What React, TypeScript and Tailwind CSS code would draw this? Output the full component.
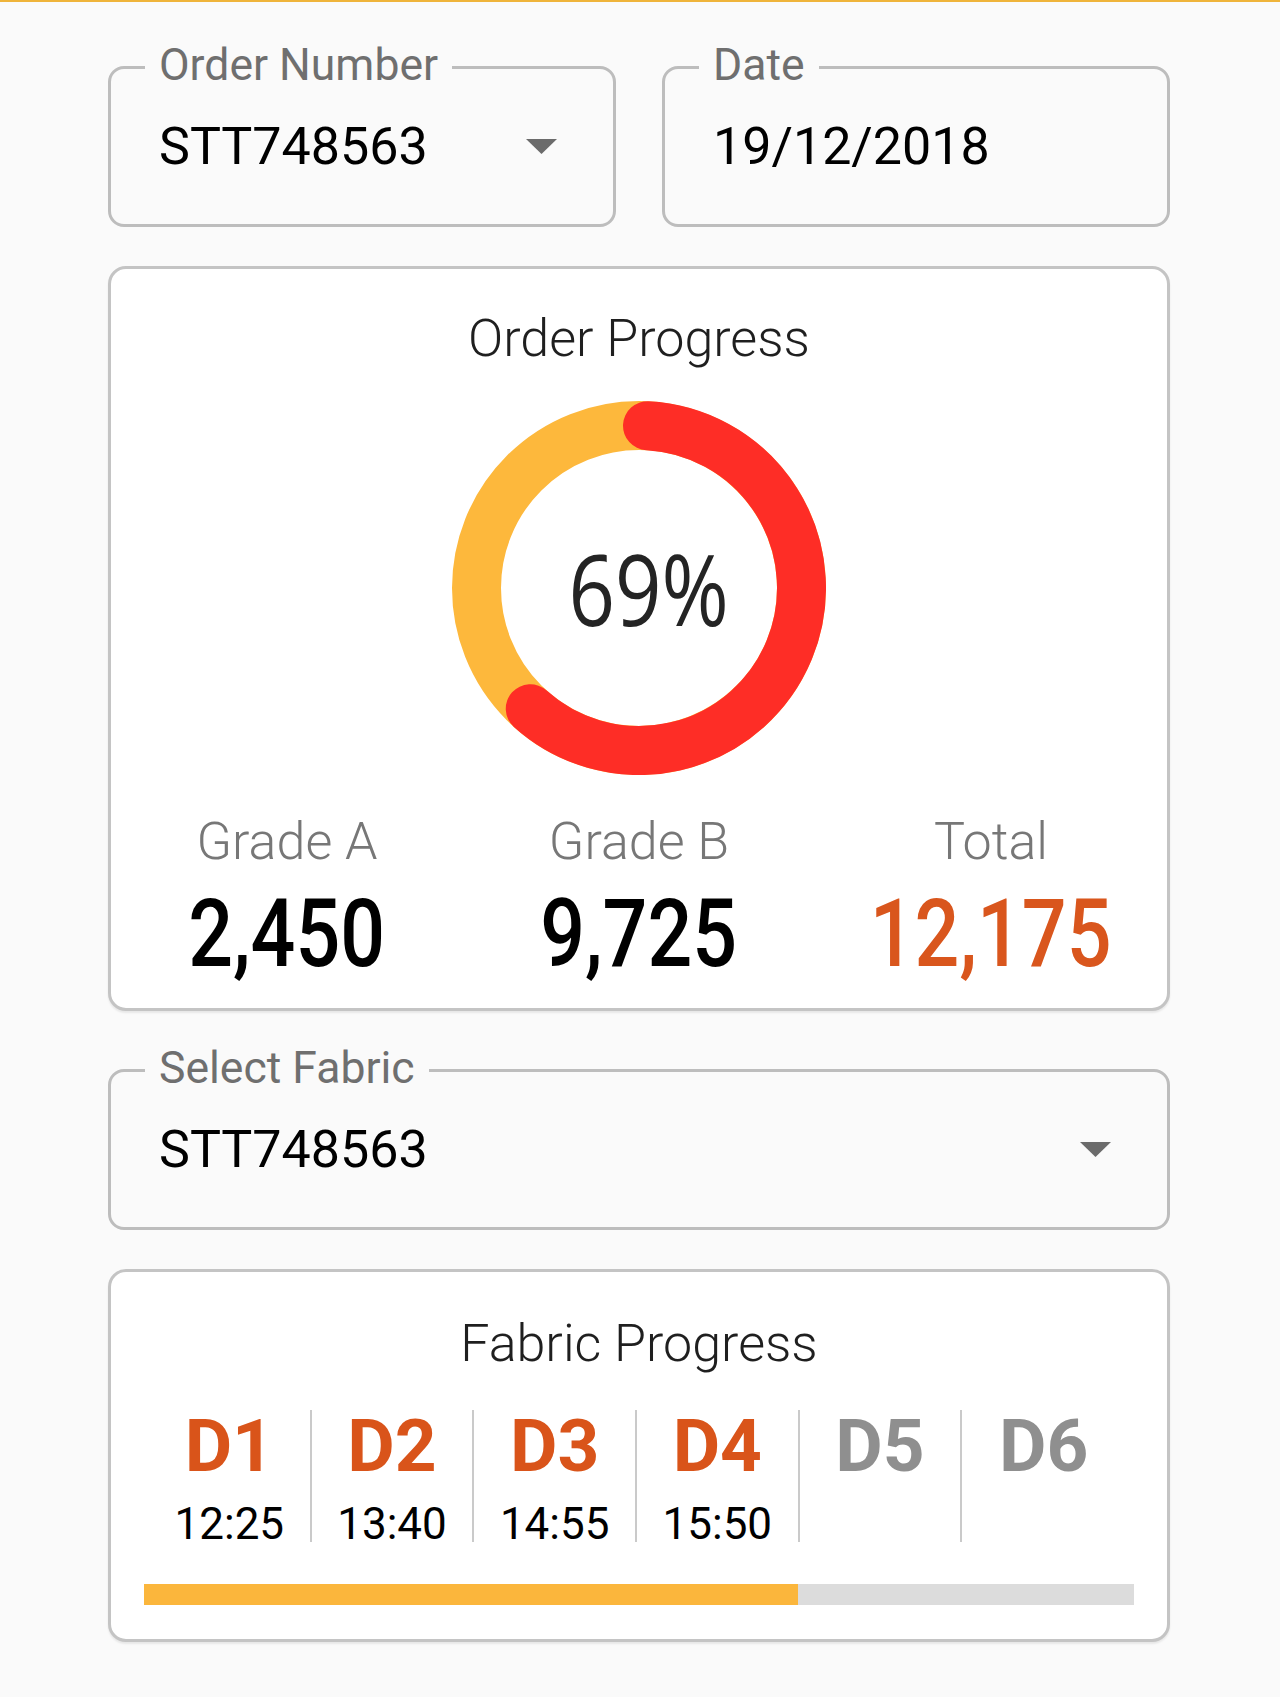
import React from 'react';

function Caret() {
  return (
    <svg width="31" height="15" viewBox="0 0 31 15" className="shrink-0">
      <path d="M0 0h31L15.5 15z" fill="#6b6b6b" />
    </svg>
  );
}

function Field({ label, value, caret = false, className = '' }: { label: string; value: string; caret?: boolean; className?: string }) {
  return (
    <div className={`relative flex h-[161px] items-center justify-between rounded-[16px] border-[3px] border-[#bdbdbd] pl-[48px] pr-[56px] ${className}`}>
      <span className="absolute left-[34px] top-[-26px] bg-[#fafafa] px-[14px] text-[44.5px] leading-none text-[#6f6f6f]">{label}</span>
      <span className="text-[52px] leading-none text-black">{value}</span>
      {caret && <Caret />}
    </div>
  );
}

const R = 162.5;
const C = 187;
function polar(deg: number) {
  const a = ((deg - 90) * Math.PI) / 180;
  return [C + R * Math.cos(a), C + R * Math.sin(a)];
}

function Donut() {
  const [x1, y1] = polar(3);
  const [x2, y2] = polar(222);
  return (
    <div className="relative mx-auto mt-[36px] flex h-[374px] w-[374px] items-center justify-center">
      <svg width="374" height="374" viewBox="0 0 374 374" className="absolute inset-0">
        <circle cx={C} cy={C} r={R} fill="none" stroke="#fdb83c" strokeWidth="49" />
        <path d={`M${x1} ${y1} A${R} ${R} 0 1 1 ${x2} ${y2}`} fill="none" stroke="#fe2d26" strokeWidth="49" strokeLinecap="round" />
      </svg>
      <span className="relative ml-[20px] inline-block origin-center scale-x-[0.83] font-['Open_Sans',sans-serif] text-[98px] leading-none text-[#242424]">69%</span>
    </div>
  );
}

const grades = [
  { label: 'Grade A', value: '2,450', color: 'text-black' },
  { label: 'Grade B', value: '9,725', color: 'text-black' },
  { label: 'Total', value: '12,175', color: 'text-[#d9561d]' },
];

const days = [
  { d: 'D1', t: '12:25' },
  { d: 'D2', t: '13:40' },
  { d: 'D3', t: '14:55' },
  { d: 'D4', t: '15:50' },
  { d: 'D5', t: '' },
  { d: 'D6', t: '' },
];

export default function App() {
  return (
    <div className="min-h-[1697px] border-t-2 border-[#efb43a] bg-[#fafafa] font-['Roboto',sans-serif]">
      <div className="ml-[108px] w-[1062px] pt-[64px]">
        <div className="grid grid-cols-2 gap-[46px]">
          <Field label="Order Number" value="STT748563" caret />
          <Field label="Date" value="19/12/2018" />
        </div>

        {/* order progress */}
        <div className="mt-[39px] h-[745px] rounded-[18px] border-[3px] border-[#c4c4c4] bg-white pt-[44px] shadow-[0_2px_2px_rgba(0,0,0,0.08)]">
          <div className="text-center text-[52px] font-light leading-none text-[#1f1f1f]">Order Progress</div>
          <Donut />
          <div className="mt-[41px] grid grid-cols-3">
            {grades.map((g) => (
              <div key={g.label} className="flex flex-col items-center">
                <span className="text-[52px] font-light leading-none text-[#777]">{g.label}</span>
                <span className={`mt-[18px] inline-block origin-center scale-x-[0.83] text-[95px] font-medium leading-none ${g.color}`}>{g.value}</span>
              </div>
            ))}
          </div>
        </div>

        <Field label="Select Fabric" value="STT748563" caret className="mt-[58px] h-[160px]" />

        {/* fabric progress */}
        <div className="mt-[39px] h-[373px] rounded-[18px] border-[3px] border-[#c4c4c4] bg-white pt-[46px] shadow-[0_2px_2px_rgba(0,0,0,0.08)]">
          <div className="text-center text-[52px] font-light leading-none text-[#1f1f1f]">Fabric Progress</div>
          <div className="ml-[38px] mt-[40px] grid w-[976px] grid-cols-6">
            {days.map((x, i) => (
              <div key={x.d} className={`flex h-[132px] flex-col items-center ${i < 5 ? 'border-r-2 border-[#cacaca]' : ''}`}>
                <span className={`text-[73px] font-bold leading-none ${x.t ? 'text-[#d9541a]' : 'text-[#8f8f8f]'}`}>{x.d}</span>
                {x.t && <span className="mt-[19px] text-[44px] leading-none text-black">{x.t}</span>}
              </div>
            ))}
          </div>
          <div className="mx-[33px] mt-[42px] h-[21px] bg-[#dcdcdc]">
            <div className="h-full w-[654px] bg-[#fbb63c]" />
          </div>
        </div>
      </div>
    </div>
  );
}
